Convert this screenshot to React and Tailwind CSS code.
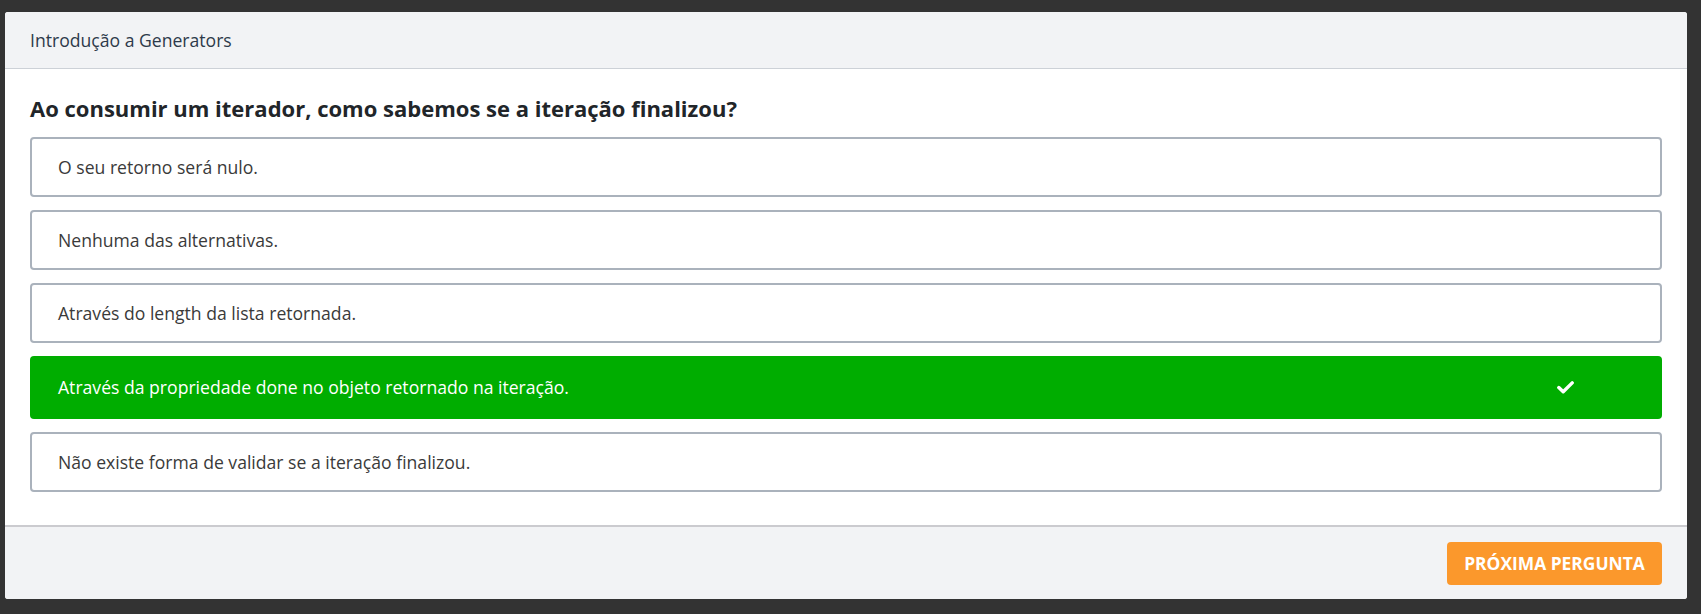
import React from "react";

const options = [
  { text: "O seu retorno será nulo.", correct: false },
  { text: "Nenhuma das alternativas.", correct: false },
  { text: "Através do length da lista retornada.", correct: false },
  { text: "Através da propriedade done no objeto retornado na iteração.", correct: true },
  { text: "Não existe forma de validar se a iteração finalizou.", correct: false },
];

function Check() {
  return (
    <svg width="17" height="13" viewBox="0 0 17 13" aria-hidden="true">
      <path d="M1.8 6.6 L6.2 10.8 L15.2 1.9" fill="none" stroke="#ffffff" strokeWidth="3.4" strokeLinecap="round" strokeLinejoin="round" />
    </svg>
  );
}

export default function App() {
  return (
    <div className="h-[614px] w-[1701px] bg-[#333333] pt-[12px] pl-[5px] pr-[14px] font-['Open_Sans',sans-serif]">
      <div className="flex h-[587px] flex-col overflow-hidden rounded-[3px] bg-white">
        <div className="flex h-[57px] items-center border-b border-[#cdd1d7] bg-[#f2f3f5] px-[25px] text-[17.6px] text-[#2d3a4a]">
          Introdução a Generators
        </div>
        <div className="flex-1 px-[25px] pt-[24px]">
          <h2 className="mb-[14px] text-[22px] font-bold leading-[30px] text-[#212529]">
            Ao consumir um iterador, como sabemos se a iteração finalizou?
          </h2>
          <div className="flex flex-col gap-[13px]">
            {options.map((o, i) =>
              o.correct ? (
                <div
                  key={i}
                  className="flex h-[63px] items-center justify-between rounded-[4px] bg-[#00ad00] pl-[28px] pr-[88px] text-[17.6px] font-medium text-white"
                >
                  <span>{o.text}</span>
                  <Check />
                </div>
              ) : (
                <div
                  key={i}
                  className="flex h-[60px] items-center rounded-[4px] border-2 border-[#aab2bc] bg-white pl-[26px] text-[17.6px] text-[#3a3a3a]"
                >
                  {o.text}
                </div>
              )
            )}
          </div>
        </div>
        <div className="flex h-[74px] items-start justify-end border-t-2 border-[#cbcbcf] bg-[#f2f3f5] px-[25px] pt-[15px]">
          <button className="flex h-[43px] w-[215px] items-center justify-center rounded-[4px] bg-[#fb982c] text-[17.4px] font-bold text-white">
            PRÓXIMA PERGUNTA
          </button>
        </div>
      </div>
    </div>
  );
}
